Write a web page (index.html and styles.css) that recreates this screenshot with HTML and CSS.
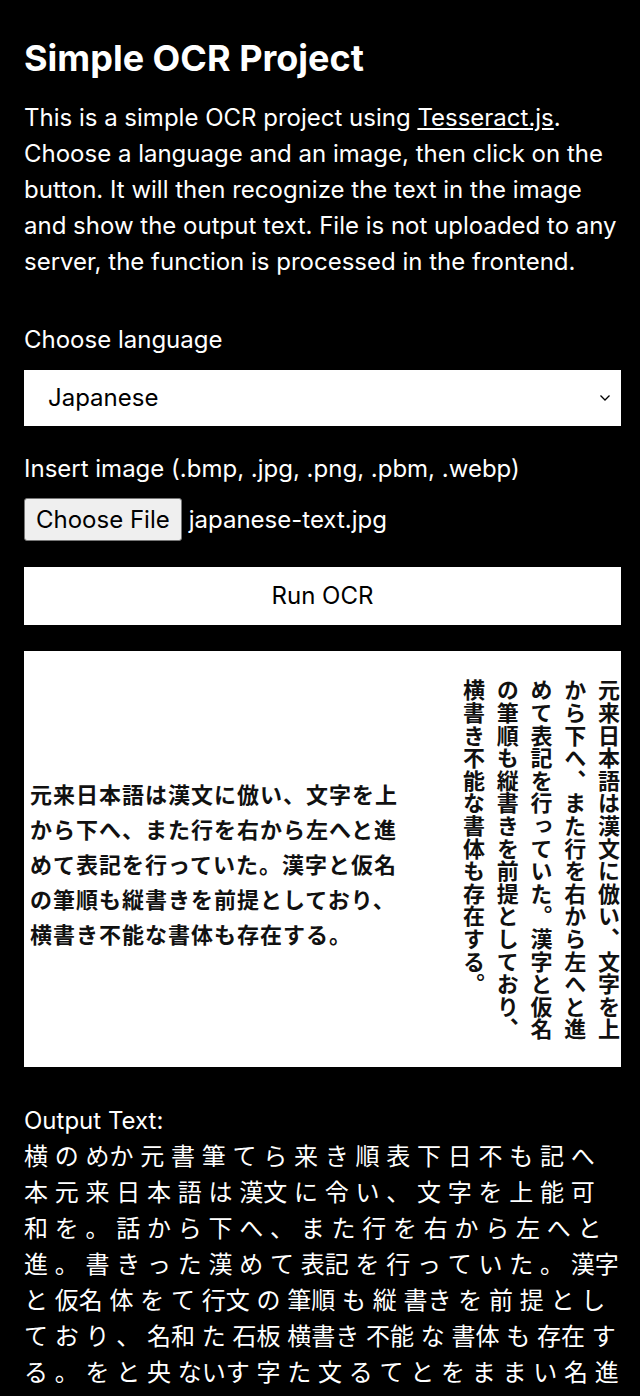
FILE: index.html
```html
<!DOCTYPE html>
<html lang="en">
<head>
<meta charset="utf-8">
<title>Simple OCR Project</title>
<link rel="stylesheet" href="styles.css">
</head>
<body>
<main class="page">
  <h1 class="title">Simple OCR Project</h1>
  <p class="intro">This is a simple OCR project using <a class="link" href="#">Tesseract.js</a>. Choose a language and an image, then click on the button. It will then recognize the text in the image and show the output text. File is not uploaded to any server, the function is processed in the frontend.</p>

  <div class="field">
    <div class="label">Choose language</div>
    <div class="select">
      <span class="select-value">Japanese</span>
      <svg class="chevron" width="12" height="8" viewBox="0 0 12 8"><path d="M1.5 1.5 L6 6 L10.5 1.5" fill="none" stroke="#000" stroke-width="1.3"/></svg>
    </div>
  </div>

  <div class="field field-file">
    <div class="label">Insert image (.bmp, .jpg, .png, .pbm, .webp)</div>
    <div class="file-row">
      <span class="file-btn">Choose File</span>
      <span class="file-name">japanese-text.jpg</span>
    </div>
  </div>

  <div class="run">Run OCR</div>

  <div class="image">
    <div class="jp-horizontal">元来日本語は漢文に倣い、文字を上<br>から下へ、また行を右から左へと進<br>めて表記を行っていた。漢字と仮名<br>の筆順も縦書きを前提としており、<br>横書き不能な書体も存在する。</div>
    <div class="jp-vertical">
      <span class="jp-col">元来日本語は漢文に倣い、文字を上</span>
      <span class="jp-col">から下へ、また行を右から左へと進</span>
      <span class="jp-col">めて表記を行っていた。漢字と仮名</span>
      <span class="jp-col">の筆順も縦書きを前提としており、</span>
      <span class="jp-col">横書き不能な書体も存在する。</span>
    </div>
  </div>

  <div class="output-label">Output Text:</div>
  <div class="output">横 の めか 元 書 筆 て ら 来 き 順 表 下 日 不 も 記 へ<br>本 元 来 日 本 語 は 漢文 に 令 い 、 文 字 を 上 能 可<br>和 を 。 話 か ら 下 へ 、 ま た 行 を 右 か ら 左 へ と<br>進 。 書 き っ た 漢 め て 表記 を 行 っ て い た 。 漢字<br>と 仮名 体 を て 行文 の 筆順 も 縦 書き を 前 提 と し<br>て お り 、 名和 た 石板 横書き 不能 な 書体 も 存在 す<br>る 。 を と 央 ないす 字 た 文 る て と を ま ま い 名 進</div>
</main>
</body>
</html>
```

FILE: styles.css
```css
* { box-sizing: border-box; }

html, body {
  margin: 0;
  background: #000;
}

body {
  color: #fff;
  font-family: Inter, "Noto Sans CJK JP", sans-serif;
  font-size: 24px;
  line-height: 36px;
}

.page {
  padding: 20px 19px 0 24px;
  width: 640px;
}

.title {
  margin: 0;
  font-size: 36px;
  line-height: 76px;
  font-weight: 700;
}

.intro {
  margin: 4px 0 0 0;
}

.link {
  color: #fff;
  text-decoration: underline;
}

.field {
  margin-top: 42px;
}

.label {
  line-height: 36px;
}

.select {
  margin-top: 12px;
  height: 56px;
  background: #fff;
  color: #000;
  display: flex;
  align-items: center;
  justify-content: space-between;
  padding: 0 10px 0 24px;
}

.chevron {
  display: block;
}

.field-file {
  margin-top: 25px;
}

.file-row {
  margin-top: 11px;
  display: flex;
  align-items: center;
  gap: 7px;
}

.file-btn {
  background: #efefef;
  color: #000;
  border: 1px solid #767676;
  border-radius: 3px;
  height: 43px;
  padding: 0 11px;
  display: flex;
  align-items: center;
}

.file-name {
  color: #fff;
}

.run {
  margin-top: 26px;
  height: 58px;
  background: #fff;
  color: #000;
  display: flex;
  align-items: center;
  justify-content: center;
}

.image {
  margin-top: 26px;
  height: 416px;
  background: #fff;
  color: #111;
  display: flex;
  justify-content: space-between;
  overflow: hidden;
  font-family: "Noto Sans CJK JP", sans-serif;
  font-weight: 700;
  font-size: 22px;
}

.jp-horizontal {
  align-self: center;
  margin: 8px 0 0 6px;
  line-height: 35px;
  letter-spacing: 1px;
  white-space: nowrap;
}

.jp-vertical {
  display: flex;
  flex-direction: row-reverse;
  align-items: flex-start;
  gap: 9.75px;
  padding-top: 28px;
}

.jp-col {
  writing-mode: vertical-rl;
  width: 24px;
  line-height: 24px;
  letter-spacing: 0.6px;
  white-space: nowrap;
}

.output-label {
  margin-top: 36px;
}

.output {
  font-family: Inter, "Noto Sans CJK JP", sans-serif;
  font-weight: 400;
  white-space: nowrap;
}
```
